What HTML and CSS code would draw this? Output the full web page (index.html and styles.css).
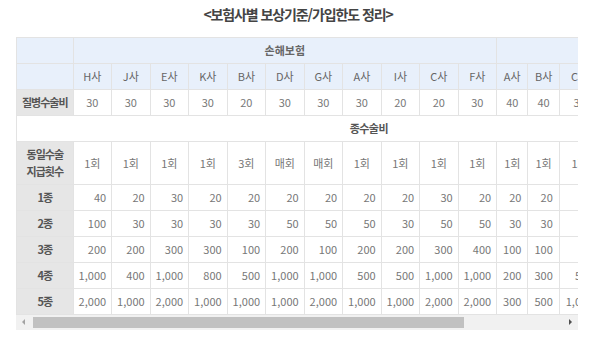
FILE: index.html
```html
<!DOCTYPE html>
<html lang="ko">
<head>
<meta charset="utf-8">
<title>보험사별 보상기준/가입한도 정리</title>
<link rel="stylesheet" href="styles.css">
</head>
<body>
<h2 class="title">&lt;보험사별 보상기준/가입한도 정리&gt;</h2>
<div class="frame">
<div class="scroller">
<table class="grid">
<thead>
<tr>
<th class="corner"></th>
<th class="group" colspan="11">손해보험</th>
<th class="group" colspan="6">생명보험</th>
</tr>
<tr>
<th class="corner"></th>
<th>H사</th><th>J사</th><th>E사</th><th>K사</th><th>B사</th><th>D사</th><th>G사</th><th>A사</th><th>I사</th><th>C사</th><th>F사</th>
<th>A사</th><th>B사</th><th>C사</th><th>D사</th><th>E사</th><th>F사</th>
</tr>
</thead>
<tbody>
<tr class="center">
<th class="label">질병수술비</th>
<td>30</td><td>30</td><td>30</td><td>30</td><td>20</td><td>30</td><td>30</td><td>30</td><td>20</td><td>20</td><td>30</td>
<td>40</td><td>40</td><td>30</td><td>30</td><td>40</td><td>40</td>
</tr>
<tr>
<td class="section" colspan="18">종수술비</td>
</tr>
<tr class="center">
<th class="label">동일수술<br>지급횟수</th>
<td>1회</td><td>1회</td><td>1회</td><td>1회</td><td>3회</td><td>매회</td><td>매회</td><td>1회</td><td>1회</td><td>1회</td><td>1회</td>
<td>1회</td><td>1회</td><td>1회</td><td>1회</td><td>1회</td><td>1회</td>
</tr>
<tr class="num">
<th class="label">1종</th>
<td>40</td><td>20</td><td>30</td><td>20</td><td>20</td><td>20</td><td>20</td><td>20</td><td>20</td><td>30</td><td>20</td>
<td>20</td><td>20</td><td>20</td><td>20</td><td>20</td><td>20</td>
</tr>
<tr class="num">
<th class="label">2종</th>
<td>100</td><td>30</td><td>30</td><td>30</td><td>30</td><td>50</td><td>50</td><td>50</td><td>30</td><td>50</td><td>50</td>
<td>30</td><td>30</td><td>30</td><td>30</td><td>30</td><td>30</td>
</tr>
<tr class="num">
<th class="label">3종</th>
<td>200</td><td>200</td><td>300</td><td>300</td><td>100</td><td>200</td><td>100</td><td>200</td><td>200</td><td>300</td><td>400</td>
<td>100</td><td>100</td><td>50</td><td>100</td><td>100</td><td>100</td>
</tr>
<tr class="num">
<th class="label">4종</th>
<td>1,000</td><td>400</td><td>1,000</td><td>800</td><td>500</td><td>1,000</td><td>1,000</td><td>500</td><td>500</td><td>1,000</td><td>1,000</td>
<td>200</td><td>300</td><td>500</td><td>500</td><td>500</td><td>500</td>
</tr>
<tr class="num">
<th class="label">5종</th>
<td>2,000</td><td>1,000</td><td>2,000</td><td>1,000</td><td>1,000</td><td>1,000</td><td>2,000</td><td>1,000</td><td>1,000</td><td>2,000</td><td>2,000</td>
<td>300</td><td>500</td><td>1,000</td><td>1,000</td><td>1,000</td><td>1,000</td>
</tr>
</tbody>
</table>
</div>
<div class="hbar" aria-hidden="true">
<span class="hbar-btn">
<svg width="15" height="15" viewBox="0 0 15 15"><polygon points="9,4 9,10 6,7" fill="#a3a3a3"/></svg>
</span>
<span class="hbar-track"><span class="hbar-thumb"></span></span>
<span class="hbar-btn">
<svg width="15" height="15" viewBox="0 0 15 15"><polygon points="6,4 6,10 9,7" fill="#505050"/></svg>
</span>
</div>
</div>
</body>
</html>
```
FILE: styles.css
```css
html, body {
  margin: 0;
  padding: 0;
  background: #ffffff;
}
body {
  font-family: "Noto Sans CJK KR", "Noto Sans", sans-serif;
  color: #666666;
}
.title {
  margin: 0 0 13px 0;
  padding-top: 4px;
  font-size: 14px;
  line-height: 20px;
  font-weight: 700;
  color: #444444;
  text-align: center;
  letter-spacing: -1.1px;
}
.frame {
  margin-left: 16px;
  width: 562px;
}
.scroller {
  width: 100%;
  overflow: hidden;
}
.grid {
  border-collapse: collapse;
  font-size: 11px;
  line-height: 17px;
  white-space: nowrap;
}
.grid th,
.grid td {
  border: 1px solid #e3e3e3;
  padding: 4px 5px;
  vertical-align: middle;
}
.grid tr > :nth-child(n+13) {
  padding-left: 6px;
  padding-right: 6px;
}
.grid thead th {
  background: #e8f0fb;
  font-weight: 400;
  color: #666666;
  text-align: center;
}
.grid thead th.group {
  font-weight: 700;
  color: #666666;
}
.grid .label {
  background: #e6e6e6;
  color: #555555;
  font-weight: 700;
  text-align: center;
  padding: 4px 5px;
  letter-spacing: -1px;
}
.grid td {
  color: #777777;
  background: #ffffff;
}
.grid .center td {
  text-align: center;
}
.grid .num td {
  text-align: right;
}
.grid td.section {
  text-align: center;
  font-weight: 700;
  color: #555555;
  letter-spacing: -0.6px;
}
.hbar {
  display: flex;
  height: 15px;
  background: #f1f1f1;
}
.hbar-btn {
  flex: 0 0 15px;
  display: flex;
}
.hbar-track {
  flex: 1 1 auto;
  display: flex;
  align-items: center;
  padding-left: 2px;
}
.hbar-thumb {
  width: 431px;
  height: 11px;
  background: #c1c1c1;
}
```
